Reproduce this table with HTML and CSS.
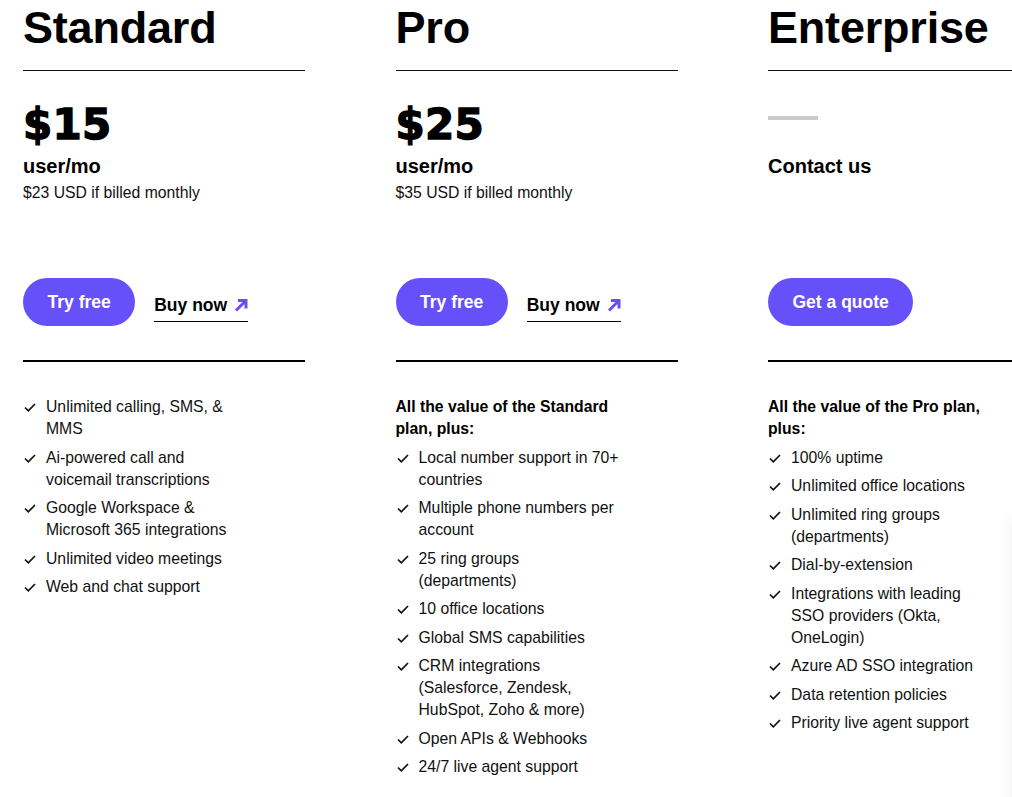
FILE: index.html
```html
<!DOCTYPE html>
<html lang="en">
<head>
<meta charset="utf-8">
<title>Pricing</title>
<link rel="stylesheet" href="styles.css">
</head>
<body>
<main class="plans">
  <section class="plan">
    <h2 class="plan-name">Standard</h2>
    <div class="price-area">
      <div class="price">$15</div>
      <div class="unit">user/mo</div>
      <div class="note">$23 USD if billed monthly</div>
    </div>
    <div class="actions">
      <a class="btn" href="#">Try free</a>
      <a class="buy" href="#">Buy now <svg class="arrow" viewBox="0 0 14 14" width="14" height="14"><path d="M2 12.5 L11.5 3 M4 2.5 H12 V10.5" fill="none" stroke="#6650fa" stroke-width="3"/></svg></a>
    </div>
    <ul class="features">
      <li><svg class="check" viewBox="0 0 12 9" width="12" height="9"><path d="M1 4.5 L4.3 7.8 L11 1" fill="none" stroke="#111" stroke-width="1.7"/></svg><span>Unlimited calling, SMS, &amp; MMS</span></li>
      <li><svg class="check" viewBox="0 0 12 9" width="12" height="9"><path d="M1 4.5 L4.3 7.8 L11 1" fill="none" stroke="#111" stroke-width="1.7"/></svg><span>Ai-powered call and voicemail transcriptions</span></li>
      <li><svg class="check" viewBox="0 0 12 9" width="12" height="9"><path d="M1 4.5 L4.3 7.8 L11 1" fill="none" stroke="#111" stroke-width="1.7"/></svg><span>Google Workspace &amp; Microsoft 365 integrations</span></li>
      <li><svg class="check" viewBox="0 0 12 9" width="12" height="9"><path d="M1 4.5 L4.3 7.8 L11 1" fill="none" stroke="#111" stroke-width="1.7"/></svg><span>Unlimited video meetings</span></li>
      <li><svg class="check" viewBox="0 0 12 9" width="12" height="9"><path d="M1 4.5 L4.3 7.8 L11 1" fill="none" stroke="#111" stroke-width="1.7"/></svg><span>Web and chat support</span></li>
    </ul>
  </section>

  <section class="plan">
    <h2 class="plan-name">Pro</h2>
    <div class="price-area">
      <div class="price">$25</div>
      <div class="unit">user/mo</div>
      <div class="note">$35 USD if billed monthly</div>
    </div>
    <div class="actions">
      <a class="btn" href="#">Try free</a>
      <a class="buy" href="#">Buy now <svg class="arrow" viewBox="0 0 14 14" width="14" height="14"><path d="M2 12.5 L11.5 3 M4 2.5 H12 V10.5" fill="none" stroke="#6650fa" stroke-width="3"/></svg></a>
    </div>
    <ul class="features">
      <li class="intro">All the value of the Standard plan, plus:</li>
      <li><svg class="check" viewBox="0 0 12 9" width="12" height="9"><path d="M1 4.5 L4.3 7.8 L11 1" fill="none" stroke="#111" stroke-width="1.7"/></svg><span>Local number support in 70+ countries</span></li>
      <li><svg class="check" viewBox="0 0 12 9" width="12" height="9"><path d="M1 4.5 L4.3 7.8 L11 1" fill="none" stroke="#111" stroke-width="1.7"/></svg><span>Multiple phone numbers per account</span></li>
      <li><svg class="check" viewBox="0 0 12 9" width="12" height="9"><path d="M1 4.5 L4.3 7.8 L11 1" fill="none" stroke="#111" stroke-width="1.7"/></svg><span>25 ring groups (departments)</span></li>
      <li><svg class="check" viewBox="0 0 12 9" width="12" height="9"><path d="M1 4.5 L4.3 7.8 L11 1" fill="none" stroke="#111" stroke-width="1.7"/></svg><span>10 office locations</span></li>
      <li><svg class="check" viewBox="0 0 12 9" width="12" height="9"><path d="M1 4.5 L4.3 7.8 L11 1" fill="none" stroke="#111" stroke-width="1.7"/></svg><span>Global SMS capabilities</span></li>
      <li><svg class="check" viewBox="0 0 12 9" width="12" height="9"><path d="M1 4.5 L4.3 7.8 L11 1" fill="none" stroke="#111" stroke-width="1.7"/></svg><span>CRM integrations (Salesforce, Zendesk, HubSpot, Zoho &amp; more)</span></li>
      <li><svg class="check" viewBox="0 0 12 9" width="12" height="9"><path d="M1 4.5 L4.3 7.8 L11 1" fill="none" stroke="#111" stroke-width="1.7"/></svg><span>Open APIs &amp; Webhooks</span></li>
      <li><svg class="check" viewBox="0 0 12 9" width="12" height="9"><path d="M1 4.5 L4.3 7.8 L11 1" fill="none" stroke="#111" stroke-width="1.7"/></svg><span>24/7 live agent support</span></li>
    </ul>
  </section>

  <section class="plan">
    <h2 class="plan-name">Enterprise</h2>
    <div class="price-area">
      <div class="dash"></div>
      <div class="contact">Contact us</div>
    </div>
    <div class="actions">
      <a class="btn" href="#">Get a quote</a>
    </div>
    <ul class="features">
      <li class="intro">All the value of the Pro plan, plus:</li>
      <li><svg class="check" viewBox="0 0 12 9" width="12" height="9"><path d="M1 4.5 L4.3 7.8 L11 1" fill="none" stroke="#111" stroke-width="1.7"/></svg><span>100% uptime</span></li>
      <li><svg class="check" viewBox="0 0 12 9" width="12" height="9"><path d="M1 4.5 L4.3 7.8 L11 1" fill="none" stroke="#111" stroke-width="1.7"/></svg><span>Unlimited office locations</span></li>
      <li><svg class="check" viewBox="0 0 12 9" width="12" height="9"><path d="M1 4.5 L4.3 7.8 L11 1" fill="none" stroke="#111" stroke-width="1.7"/></svg><span>Unlimited ring groups (departments)</span></li>
      <li><svg class="check" viewBox="0 0 12 9" width="12" height="9"><path d="M1 4.5 L4.3 7.8 L11 1" fill="none" stroke="#111" stroke-width="1.7"/></svg><span>Dial-by-extension</span></li>
      <li><svg class="check" viewBox="0 0 12 9" width="12" height="9"><path d="M1 4.5 L4.3 7.8 L11 1" fill="none" stroke="#111" stroke-width="1.7"/></svg><span>Integrations with leading SSO providers (Okta, OneLogin)</span></li>
      <li><svg class="check" viewBox="0 0 12 9" width="12" height="9"><path d="M1 4.5 L4.3 7.8 L11 1" fill="none" stroke="#111" stroke-width="1.7"/></svg><span>Azure AD SSO integration</span></li>
      <li><svg class="check" viewBox="0 0 12 9" width="12" height="9"><path d="M1 4.5 L4.3 7.8 L11 1" fill="none" stroke="#111" stroke-width="1.7"/></svg><span>Data retention policies</span></li>
      <li><svg class="check" viewBox="0 0 12 9" width="12" height="9"><path d="M1 4.5 L4.3 7.8 L11 1" fill="none" stroke="#111" stroke-width="1.7"/></svg><span>Priority live agent support</span></li>
    </ul>
  </section>
</main>
<div class="edge-card"></div>
</body>
</html>
```
FILE: styles.css
```css
html, body {
  margin: 0;
  padding: 0;
  overflow: hidden;
  background: #fff;
}
body {
  font-family: "Liberation Sans", Arial, sans-serif;
  color: #111;
  width: 1012px;
  height: 797px;
  position: relative;
}
.plans {
  display: grid;
  grid-template-columns: 282px 282px 282px;
  column-gap: 90.5px;
  padding: 2px 0 0 23px;
  width: max-content;
}
.plan {
  display: flex;
  flex-direction: column;
}
.plan-name {
  margin: 0;
  font-size: 45px;
  line-height: 52px;
  font-weight: 700;
  color: #000;
  letter-spacing: -0.2px;
  padding-bottom: 16px;
  border-bottom: 1px solid #111;
}
.price-area {
  margin-top: 32px;
  height: 175px;
  display: flex;
  flex-direction: column;
  align-items: flex-start;
}
.price {
  font-family: "DejaVu Sans", sans-serif;
  font-weight: 700;
  font-size: 42px;
  line-height: 44px;
  color: #000;
  -webkit-text-stroke: 1.4px #000;
  letter-spacing: 0.3px;
}
.unit, .contact {
  font-size: 20px;
  line-height: 24px;
  font-weight: 700;
  color: #000;
  margin-top: 7px;
}
.note {
  font-size: 15.75px;
  line-height: 22px;
  margin-top: 4px;
}
.dash {
  width: 50px;
  height: 4px;
  background: #cacaca;
  margin-top: 13px;
}
.contact {
  margin-top: 34px;
}
.actions {
  display: flex;
  align-items: flex-start;
  gap: 19px;
  height: 48px;
  padding-bottom: 34px;
  border-bottom: 2px solid #000;
}
.btn {
  display: inline-block;
  height: 48px;
  line-height: 48px;
  padding: 0 24.5px;
  border-radius: 24px;
  background: #6650fa;
  color: #fff;
  font-weight: 700;
  font-size: 17.5px;
  text-decoration: none;
}
.buy {
  margin-top: 16px;
  display: inline-block;
  font-size: 17.5px;
  line-height: 22px;
  font-weight: 700;
  color: #000;
  text-decoration: none;
  padding-bottom: 5px;
  border-bottom: 1px solid #000;
}
.arrow {
  margin-left: 2px;
  vertical-align: -1px;
}
.features {
  list-style: none;
  margin: 34px 0 0;
  padding: 0;
  width: 225px;
  display: flex;
  flex-direction: column;
  gap: 6.5px;
  font-size: 15.75px;
  line-height: 22px;
}
.features li {
  display: grid;
  grid-template-columns: 23px 1fr;
  align-items: start;
}
.features li.intro {
  display: block;
  font-weight: 700;
  color: #000;
}
.check {
  margin: 7px 0 0 1px;
}
.edge-card {
  position: absolute;
  left: 1012px;
  top: 518px;
  width: 300px;
  height: 400px;
  background: #fff;
  box-shadow: 0 0 14px rgba(0, 0, 0, 0.07);
}
```
